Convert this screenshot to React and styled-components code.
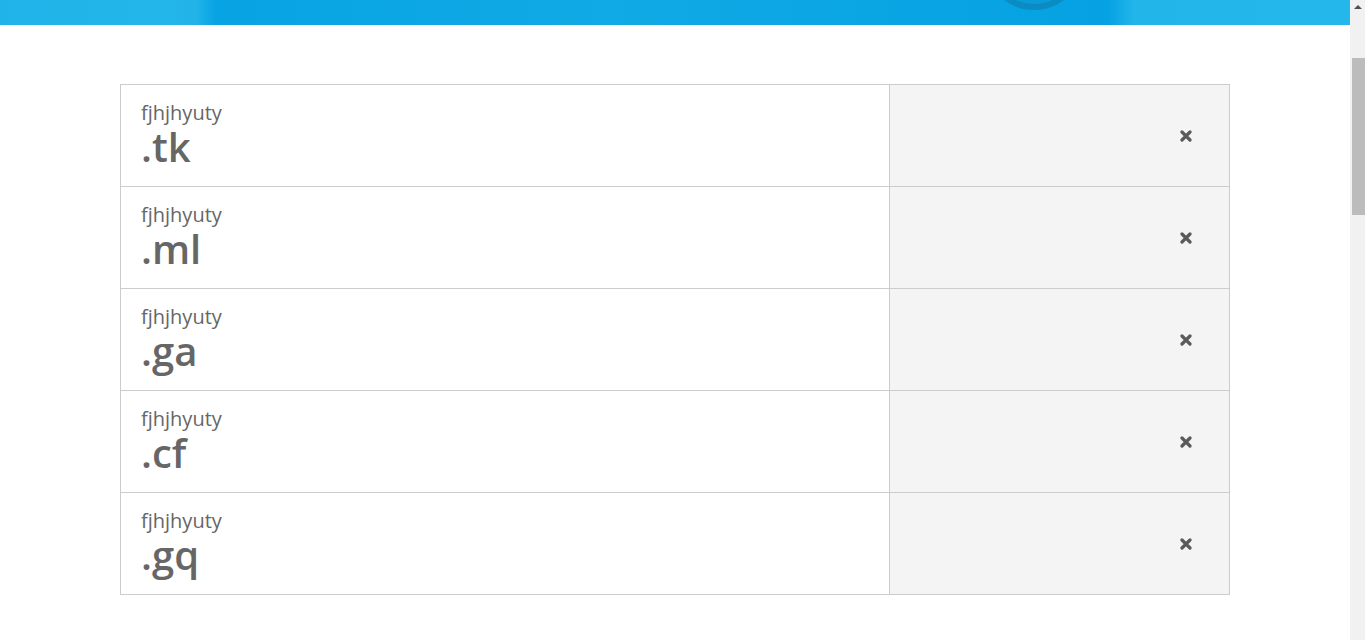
import React from "react";
import styled, { createGlobalStyle } from "styled-components";

const GlobalStyle = createGlobalStyle`
  html, body {
    margin: 0;
    padding: 0;
    background: #fff;
    overflow: hidden;
  }
  body {
    font-family: "Open Sans", "Liberation Sans", sans-serif;
    color: #666;
  }
  *, *::before, *::after {
    box-sizing: border-box;
  }
`;

const domains = [".tk", ".ml", ".ga", ".cf", ".gq"];

const Page = styled.div`
  display: flex;
  width: 1365px;
  height: 640px;
`;

const Main = styled.main`
  width: 1350px;
  display: flex;
  flex-direction: column;
`;

const Banner = styled.div`
  height: 25px;
  overflow: hidden;
  background: linear-gradient(
    90deg,
    #20b3e9 0%,
    #23b6ea 12%,
    #22b4e9 14.5%,
    #07a3e3 16%,
    #10aae5 45%,
    #08a4e3 70%,
    #05a1e2 82%,
    #22b5ea 84%,
    #24b7eb 100%
  );
  svg {
    display: block;
  }
`;

const Table = styled.div`
  margin: 59px auto 0;
  width: 1110px;
  border: 1px solid #ccc;
  border-bottom: none;
`;

const Row = styled.div`
  display: grid;
  grid-template-columns: 769px 1fr;
  height: 102px;
  border-bottom: 1px solid #ccc;
`;

const NameCell = styled.div`
  padding: 16px 20px 0;
  border-right: 1px solid #ccc;
`;

const Name = styled.div`
  font-size: 20px;
  line-height: 24px;
  color: #666;
`;

const Tld = styled.div`
  font-size: 40px;
  font-weight: 600;
  line-height: 43px;
  color: #666;
`;

const ActionCell = styled.div`
  background: #f4f4f4;
  display: flex;
  align-items: center;
  justify-content: flex-end;
  padding-right: 37px;
`;

const Remove = styled.button`
  border: none;
  background: none;
  padding: 0;
  cursor: pointer;
  display: flex;
  color: #5a5a5a;
`;

const Scrollbar = styled.div`
  width: 15px;
  background: #f1f1f1;
  position: relative;
`;

const Arrow = styled.div`
  position: absolute;
  top: 5px;
  left: 4px;
  width: 0;
  height: 0;
  border-left: 4px solid transparent;
  border-right: 4px solid transparent;
  border-bottom: 4px solid #505050;
`;

const Thumb = styled.div`
  position: absolute;
  top: 58px;
  left: 2px;
  width: 13px;
  height: 157px;
  background: #bcbcbc;
`;

const TimesIcon = () => (
  <svg width="12" height="12" viewBox="0 0 12 12">
    <path
      d="M2 2 L10 10 M10 2 L2 10"
      stroke="currentColor"
      strokeWidth="3.2"
      strokeLinecap="round"
    />
  </svg>
);

const App = () => (
  <Page>
    <GlobalStyle />
    <Main>
      <Banner>
        <svg width="1350" height="25" viewBox="0 0 1350 25">
          <circle cx="1034" cy="-40" r="48" fill="#0a9ad6" />
          <circle cx="1034" cy="-40" r="47" fill="none" stroke="#0a8cc2" strokeWidth="6" />
        </svg>
      </Banner>
      <Table>
        {domains.map((tld) => (
          <Row key={tld}>
            <NameCell>
              <Name>fjhjhyuty</Name>
              <Tld>{tld}</Tld>
            </NameCell>
            <ActionCell>
              <Remove aria-label="remove">
                <TimesIcon />
              </Remove>
            </ActionCell>
          </Row>
        ))}
      </Table>
    </Main>
    <Scrollbar>
      <Arrow />
      <Thumb />
    </Scrollbar>
  </Page>
);

export default App;
